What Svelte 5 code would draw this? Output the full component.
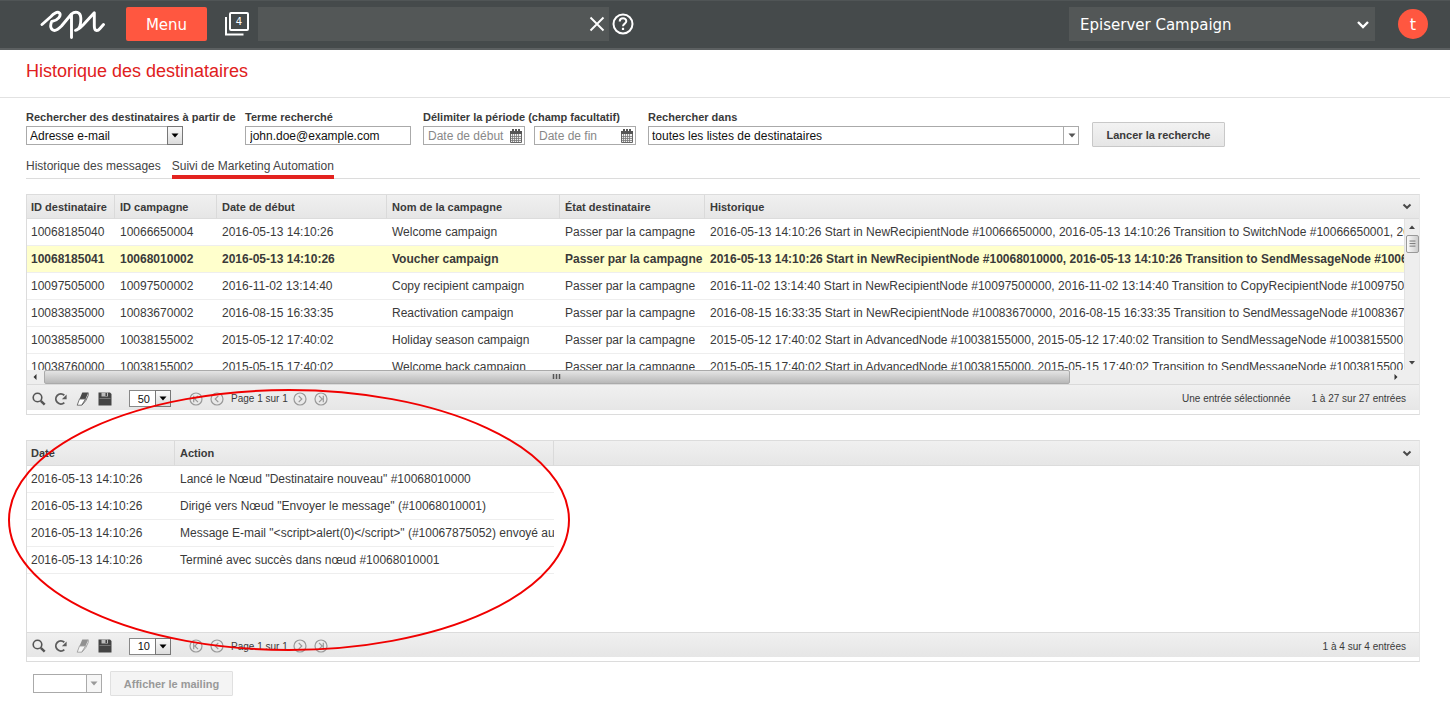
<script>
  const columns = ['ID destinataire', 'ID campagne', 'Date de début', 'Nom de la campagne', 'État destinataire', 'Historique'];
  const passing = 'Passer par la campagne';
  const recipients = [
    ['10068185040', '10066650004', '2016-05-13 14:10:26', 'Welcome campaign', passing, '2016-05-13 14:10:26 Start in NewRecipientNode #10066650000, 2016-05-13 14:10:26 Transition to SwitchNode #10066650001, 2016-05-13 14:10:26'],
    ['10068185041', '10068010002', '2016-05-13 14:10:26', 'Voucher campaign', passing, '2016-05-13 14:10:26 Start in NewRecipientNode #10068010000, 2016-05-13 14:10:26 Transition to SendMessageNode #10068010001'],
    ['10097505000', '10097500002', '2016-11-02 13:14:40', 'Copy recipient campaign', passing, '2016-11-02 13:14:40 Start in NewRecipientNode #10097500000, 2016-11-02 13:14:40 Transition to CopyRecipientNode #10097500001'],
    ['10083835000', '10083670002', '2016-08-15 16:33:35', 'Reactivation campaign', passing, '2016-08-15 16:33:35 Start in NewRecipientNode #10083670000, 2016-08-15 16:33:35 Transition to SendMessageNode #10083670001'],
    ['10038585000', '10038155002', '2015-05-12 17:40:02', 'Holiday season campaign', passing, '2015-05-12 17:40:02 Start in AdvancedNode #10038155000, 2015-05-12 17:40:02 Transition to SendMessageNode #10038155001,'],
    ['10038760000', '10038155002', '2015-05-15 17:40:02', 'Welcome back campaign', passing, '2015-05-15 17:40:02 Start in AdvancedNode #10038155000, 2015-05-15 17:40:02 Transition to SendMessageNode #10038155001']
  ];
  const actions = [
    'Lancé le Nœud "Destinataire nouveau" #10068010000',
    'Dirigé vers Nœud "Envoyer le message" (#10068010001)',
    'Message E-mail "<' + 'script>alert(0)</' + 'script>" (#10067875052) envoyé au destinataire',
    'Terminé avec succès dans nœud #10068010001'
  ];
  let selected = $state(1);
</script>

{#snippet chevron()}
  <svg width="10" height="7" viewBox="0 0 10 7" fill="none" stroke="#4a4a4a" stroke-width="2" aria-hidden="true"><path d="M1.5 1.5 5 4.8 8.5 1.5" /></svg>
{/snippet}

{#snippet arrow(boxed)}
  <span class="drop" class:boxed><svg width="8" height="5" viewBox="0 0 8 5" aria-hidden="true"><path d="M.5 .5h7L4 4.5z" fill="currentColor" /></svg></span>
{/snippet}

{#snippet calendar()}
  <svg class="cal" width="12" height="14" viewBox="0 0 12 14" aria-hidden="true">
    <path d="M.5 2.500h11V13.500H.5z" fill="#eee" stroke="#666" />
    <path d="M0 2h12v3H0zM2 0h2v3H2zM5 0h2v3H5zM8 0h2v3H8z" fill="#555" />
    <path d="M2.500 5v8M4.500 5v8M6.500 5v8M8.500 5v8M1 7.500h10M1 9.500h10M1 11.500h10" stroke="#777" stroke-width=".8" />
  </svg>
{/snippet}

{#snippet toolbar(size, dim, label)}
  <div class="toolbar">
    <button class="tool" aria-label="Rechercher"><svg width="14" height="14" viewBox="0 0 14 14" fill="none" stroke="#555"><circle cx="5.500" cy="5.500" r="4.300" stroke-width="1.600" /><path d="M8.800 8.800 12.700 12.700" stroke-width="2.400" /></svg></button>
    <button class="tool" aria-label="Actualiser"><svg width="14" height="14" viewBox="0 0 14 14"><path d="M10.300 10.600A5 5 0 1 1 10.300 3.300" fill="none" stroke="#5c5c5c" stroke-width="1.900" /><path d="M12.600 2.500v4.700H7.900z" fill="#5c5c5c" /></svg></button>
    <button class="tool" aria-label="Effacer"><svg width="14" height="14" viewBox="0 0 14 14" opacity={dim ? 0.55 : 1}><path d="M6.300 .5H12.300L9.500 7H3.500z" fill="#484848" /><path d="M3.500 7 1.200 13.200H5.700L9.500 7z" fill="#fff" stroke="#666" stroke-width=".9" /><path d="M12.200 .7V3.500L9.800 8.500 5.900 13.200" fill="none" stroke="#666" /></svg></button>
    <button class="tool" aria-label="Enregistrer"><svg width="14" height="14" viewBox="0 0 14 14"><path d="M.5 .5h11.500l1.500 1.500v11.500h-13z" fill="#444" /><path d="M3.500 .5h6.500v4H3.500z" fill="#bbb" /><path d="M7.500 1h1.500v3H7.500z" fill="#444" /><path d="M1.500 6.500h11" stroke="#777" /></svg></button>
    <span class="combo size"><select aria-label={label}><option>{size}</option></select>{@render arrow(true)}</span>
    <button class="page" aria-label="Première page"><svg width="14" height="14" viewBox="0 0 14 14" fill="none" stroke="currentColor" stroke-width="1.200"><circle cx="7" cy="7" r="6" /><path d="M4.700 3.800v6.400M9 3.800 5.800 7 9 10.200" /></svg></button>
    <button class="page" aria-label="Page précédente"><svg width="14" height="14" viewBox="0 0 14 14" fill="none" stroke="currentColor" stroke-width="1.200"><circle cx="7" cy="7" r="6" /><path d="M8.300 3.800 5.200 7 8.300 10.200" /></svg></button>
    <span class="count">Page 1 sur 1</span>
    <button class="page" aria-label="Page suivante"><svg width="14" height="14" viewBox="0 0 14 14" fill="none" stroke="currentColor" stroke-width="1.200"><circle cx="7" cy="7" r="6" /><path d="M5.700 3.800 8.800 7 5.700 10.200" /></svg></button>
    <button class="page" aria-label="Dernière page"><svg width="14" height="14" viewBox="0 0 14 14" fill="none" stroke="currentColor" stroke-width="1.200"><circle cx="7" cy="7" r="6" /><path d="M9.300 3.800v6.400M5 3.800 8.200 7 5 10.200" /></svg></button>
    <span class="info">
      {#if !dim}<span>Une entrée sélectionnée</span>{/if}
      <span>{dim ? '1 à 4 sur 4 entrées' : '1 à 27 sur 27 entrées'}</span>
    </span>
  </div>
{/snippet}

<header>
  <svg class="logo" width="66" height="30" viewBox="0 0 66 30" fill="none" stroke="#fff" stroke-width="2.900" stroke-linecap="round" stroke-linejoin="round" role="img" aria-label="epi">
    <path d="M2 15.500 11 7.500C14 4.500 17.500 2.200 19.500 4 21.500 6.500 18 11.500 11.800 12.500 9.500 17 11 21.500 14.500 21.500 17 21.500 19 19.500 21.500 17L31.500 5V28.500M31.500 5C35 2 40.500 2.500 40.800 9 41 15 39.500 21 35.500 21.300 39 20.500 41 18 43.500 15.500L54.300 3.800V17C54.300 22.500 57.500 22.500 60 19.500L63.500 15.500" />
  </svg>
  <button class="menu">Menu</button>
  <svg class="pages" width="24" height="24" viewBox="0 0 24 24" fill="none" stroke="#fff" aria-hidden="true"><rect x="5" y="1" width="18" height="17" rx="1" stroke-width="2" /><path d="M1 5V22.500H18.500" stroke-width="2" /><text x="14" y="13" text-anchor="middle">4</text></svg>
  <div class="search">
    <input aria-label="Recherche" />
    <button aria-label="Effacer la recherche"><svg width="16" height="16" viewBox="0 0 16 16" stroke="#fff" stroke-width="1.900"><path d="M1.500 1.500 14.500 14.500M14.500 1.500 1.500 14.500" /></svg></button>
  </div>
  <svg width="22" height="22" viewBox="0 0 22 22" fill="none" stroke="#fff" aria-hidden="true"><circle cx="11" cy="11" r="9.500" stroke-width="2" /><path d="M7.700 8.500C7.800 4.200 14.300 4.300 14.300 8.300 14.300 10.700 11 10.500 11 13.300" stroke-width="2" /><path d="M11 14.800v2.200" stroke-width="2.200" /></svg>
  <div class="product">
    <select aria-label="Produit"><option>Episerver Campaign</option></select>
    <svg width="14" height="10" viewBox="0 0 14 10" fill="none" stroke="#fff" stroke-width="2.400" aria-hidden="true"><path d="M2 3 7 8 12 3" /></svg>
  </div>
  <button class="avatar" aria-label="Compte">t</button>
</header>

<h1>Historique des destinataires</h1>

<main>
  <form onsubmit={(e) => e.preventDefault()}>
    <div class="field from">
      <label for="from">Rechercher des destinataires à partir de</label>
      <span class="combo"><select id="from"><option>Adresse e-mail</option></select>{@render arrow(true)}</span>
    </div>
    <div class="field term">
      <label for="term">Terme recherché</label>
      <input id="term" value="john.doe@example.com" />
    </div>
    <div class="field period">
      <label for="start">Délimiter la période (champ facultatif)</label>
      <div class="dates">
        <span class="date"><input id="start" placeholder="Date de début" />{@render calendar()}</span>
        <span class="date"><input aria-label="Date de fin" placeholder="Date de fin" />{@render calendar()}</span>
      </div>
    </div>
    <div class="field lists">
      <label for="lists">Rechercher dans</label>
      <span class="combo flat"><select id="lists"><option>toutes les listes de destinataires</option></select>{@render arrow(false)}</span>
    </div>
    <button class="action">Lancer la recherche</button>
  </form>

  <nav>
    <a href="#messages">Historique des messages</a>
    <a href="#automation" class="active">Suivi de Marketing Automation</a>
  </nav>

  <section>
    <div class="clip">
      <table>
        <colgroup><col class="c1" /><col class="c2" /><col class="c3" /><col class="c4" /><col class="c5" /><col /><col class="bar" /></colgroup>
        <thead>
          <tr>{#each columns as c}<th>{c}</th>{/each}<th class="opt">{@render chevron()}</th></tr>
        </thead>
        <tbody>
          {#each recipients as row, i}
            <tr class:selected={selected === i} onclick={() => (selected = i)}>
              {#each row as cell}<td>{cell}</td>{/each}
              {#if i === 0}
                <td class="scroll" rowspan="6">
                  <div class="vbar">
                    <svg width="14" height="16" viewBox="0 0 14 16" aria-hidden="true"><path d="M4 10 7 6.500 10 10z" fill="#444" /></svg>
                    <svg class="vthumb" width="13" height="18" viewBox="0 0 13 18" aria-hidden="true"><path d="M3 5.500h7M3 8.500h7M3 11.500h7" stroke="#666" /></svg>
                    <svg class="down" width="14" height="16" viewBox="0 0 14 16" aria-hidden="true"><path d="M4 7h6L7 10.500z" fill="#444" /></svg>
                  </div>
                </td>
              {/if}
            </tr>
          {/each}
        </tbody>
      </table>
    </div>
    <div class="hbar">
      <svg width="17" height="14" viewBox="0 0 17 14" aria-hidden="true"><path d="M9.500 4v6L6.500 7z" fill="#333" /></svg>
      <div class="hthumb"><svg width="10" height="8" viewBox="0 0 10 8" aria-hidden="true"><path d="M1.500 1v5M4.500 1v5M7.500 1v5" stroke="#555" stroke-width="1.500" /></svg></div>
      <svg class="right" width="17" height="14" viewBox="0 0 17 14" aria-hidden="true"><path d="M7.500 4v6L10.500 7z" fill="#333" /></svg>
    </div>
    {@render toolbar('50', false, 'Entrées par page')}
  </section>

  <section class="details">
    <div class="body">
      <table>
        <colgroup><col class="d1" /><col class="d2" /><col /></colgroup>
        <thead><tr><th>Date</th><th>Action</th><th class="opt">{@render chevron()}</th></tr></thead>
        <tbody>
          {#each actions as a}<tr><td>2016-05-13 14:10:26</td><td>{a}</td><td class="none"></td></tr>{/each}
        </tbody>
      </table>
    </div>
    {@render toolbar('10', true, 'Actions par page')}
    <svg class="mark" width="564" height="264" viewBox="0 0 564 264" fill="none" stroke="#f00000" stroke-width="2" aria-hidden="true"><ellipse cx="282" cy="132" rx="280" ry="130" /></svg>
  </section>

  <footer>
    <span class="combo off"><select aria-label="Mailing" disabled><option></option></select>{@render arrow(true)}</span>
    <button class="action" disabled>Afficher le mailing</button>
  </footer>
</main>

<style>
  :global(body) { background: #fff; font-family: "Liberation Sans", Arial, sans-serif; font-size: 12px; color: #3a3a3a; }
  :global(*) { box-sizing: border-box; }
  button, input, select { font: inherit; margin: 0; border-radius: 0; color: inherit; }
  select { appearance: none; width: 100%; outline: none; opacity: 1; }
  button { padding: 0; border: 0; background: none; }
  svg { display: block; flex: none; }

  header { display: flex; align-items: center; height: 50px; padding: 0 22px 2px 40px; background: #454a4b; border-top: 1px solid #505556; border-bottom: 2px solid #5c6061; color: #fff; font-family: "DejaVu Sans", Verdana, sans-serif; }
  .menu { width: 81px; height: 34px; margin: 0 18px 0 20px; padding-top: 2px; background: #ff5740; border-radius: 2px; font-size: 15px; }
  .pages text { font-size: 10px; fill: #fff; stroke: none; }
  .search { display: flex; align-items: center; width: 351px; height: 34px; margin: 0 3px 0 9px; padding-right: 4px; background: #535757; }
  .search input { flex: 1; min-width: 0; height: 100%; border: 0; background: none; }
  .product { display: grid; align-items: center; width: 306px; height: 34px; margin: 0 23px 0 auto; background: #535757; }
  .product select { grid-area: 1 / 1; height: 100%; padding: 2px 11px 0; border: 0; background: none; font-size: 15px; }
  .product svg { grid-area: 1 / 1; justify-self: end; margin-right: 5px; pointer-events: none; }
  .avatar { width: 30px; height: 30px; padding-top: 2px; background: #ff5740; border-radius: 50%; font-size: 16px; }

  h1 { margin: 0; padding: 10px 26px 14px; border-bottom: 1px solid #e2e2e2; color: #e02020; font-size: 18px; font-weight: 400; line-height: 23px; }
  main { padding: 12px 30px 0 26px; }

  form { display: flex; align-items: flex-end; height: 37px; }
  .field { display: flex; flex-direction: column; min-width: 0; padding-bottom: 2px; white-space: nowrap; }
  label { font-size: 11px; font-weight: 700; line-height: 15px; }
  .field label { height: 16px; }
  .from { width: 219px; }
  .from .combo { width: 157px; }
  .term { width: 166px; margin-right: 12px; }
  .period { width: 213px; margin-right: 12px; }
  .lists { flex: 0 1 431px; margin-right: 13px; }
  .dates { display: flex; gap: 9px; }
  .date, .combo { display: grid; }
  .date > *, .combo > :global(*) { grid-area: 1 / 1; }
  input, .combo select { height: 19px; padding: 0 4px; border: 1px solid #aaa; background: #fff; color: #111; }
  .combo select { padding: 0 3px; }
  .date input { width: 102px; }
  .date input::placeholder { color: #888; opacity: 1; }
  .cal { grid-area: 1 / 1; justify-self: end; align-self: center; margin-right: 3px; }
  .search input { border: 0; background: none; color: #fff; }
  .drop { display: flex; align-items: center; justify-content: center; justify-self: end; width: 16px; height: 19px; border-left: 1px solid #aaa; color: #555; pointer-events: none; }
  .boxed { border: 1px solid #777; background: linear-gradient(#fafafa, #dcdcdc); color: #000; }
  .action { width: 133px; height: 25px; border: 1px solid #c8c8c8; border-radius: 1px; background: linear-gradient(#f2f2f2, #e6e6e6); font-size: 11px; font-weight: 700; }

  nav { display: flex; gap: 11px; margin: 11px 0 15px; border-bottom: 1px solid #dcdcdc; }
  nav a { height: 21px; margin-bottom: -1px; color: #444; line-height: 16px; text-decoration: none; }
  .active { border-bottom: 4px solid #e3231f; }

  section { position: relative; padding-bottom: 4px; border: 1px solid #dcdcdc; border-right-color: #e6e6e6; }
  .clip { height: 175px; overflow: hidden; }
  .body { height: 191px; }
  table { width: 100%; table-layout: fixed; border-collapse: separate; border-spacing: 0; }
  .c1 { width: 88px; } .c2 { width: 102px; } .c3 { width: 170px; } .c4 { width: 173px; } .c5 { width: 145px; } .bar { width: 15px; }
  .d1 { width: 148px; } .d2 { width: 379px; }
  th { height: 24px; padding: 0 5px 0 4px; overflow: hidden; border-right: 1px solid #dadada; border-bottom: 1px solid #dcdcdc; background: linear-gradient(#f0f0f0, #e6e6e6); font-size: 11px; text-align: left; white-space: nowrap; }
  th:nth-last-child(-n + 2) { border-right: 0; }
  th + th, td + td { padding-left: 5px; }
  td { height: 27px; padding: 0 0 0 4px; overflow: hidden; border-bottom: 1px solid #eee; white-space: nowrap; }
  .selected td:not(.scroll) { background: #ffffcc; font-weight: 700; }
  .clip .opt { padding: 0; overflow: visible; }
  .clip .opt svg { margin-left: -2px; }
  .details .opt svg { margin: 0 2px 0 auto; }
  .details th:nth-child(2) { border-right: 1px solid #dadada; }
  .details th { height: 25px; }
  td.none { border: 0; }
  td.scroll { padding: 0; vertical-align: top; background: #eee; }
  .vbar { display: flex; flex-direction: column; align-items: center; height: 151px; border-left: 1px solid #e2e2e2; }
  .vthumb { border: 1px solid #999; border-radius: 2px; background: linear-gradient(90deg, #fafafa, #ccc); }
  .down { margin-top: auto; }
  .hbar { display: flex; height: 15px; border-bottom: 1px solid #dadada; background: #eee; }
  .hthumb { display: flex; justify-content: center; flex: 0 1 1026px; height: 14px; padding-top: 2px; border: 1px solid #aaa; border-radius: 2px; background: linear-gradient(#e4e4e4, #b8b8b8); }
  .right { margin: 0 15px 0 auto; }

  .toolbar { display: flex; align-items: center; height: 25px; padding: 2px 13px 0 5px; background: linear-gradient(#f0f0f0, #e6e6e6); font-size: 10px; }
  .tool { margin-right: 8px; }
  .size { width: 42px; margin: 0 18px 0 9px; font-size: 11px; }
  .combo.size select { height: 17px; padding: 0 20px 0 0; border-color: #888; text-align: right; text-align-last: right; }
  .size .drop { height: 17px; }
  .page { margin-right: 7px; color: #999; }
  .count { margin-right: 5px; }
  .info { display: flex; gap: 21px; margin-left: auto; }

  .details { margin-top: 25px; }
  .details .toolbar { border-top: 1px solid #dcdcdc; }
  .mark { position: absolute; left: -20px; top: -53px; pointer-events: none; }

  footer { display: flex; align-items: center; gap: 8px; padding: 9px 7px; }
  .off { width: 69px; }
  .off .boxed { border-color: #aaa; background: #f6f6f6; color: #999; }
  footer .action { width: 123px; border-color: #e0e0e0; background: #f4f4f4; color: #999; }
</style>
